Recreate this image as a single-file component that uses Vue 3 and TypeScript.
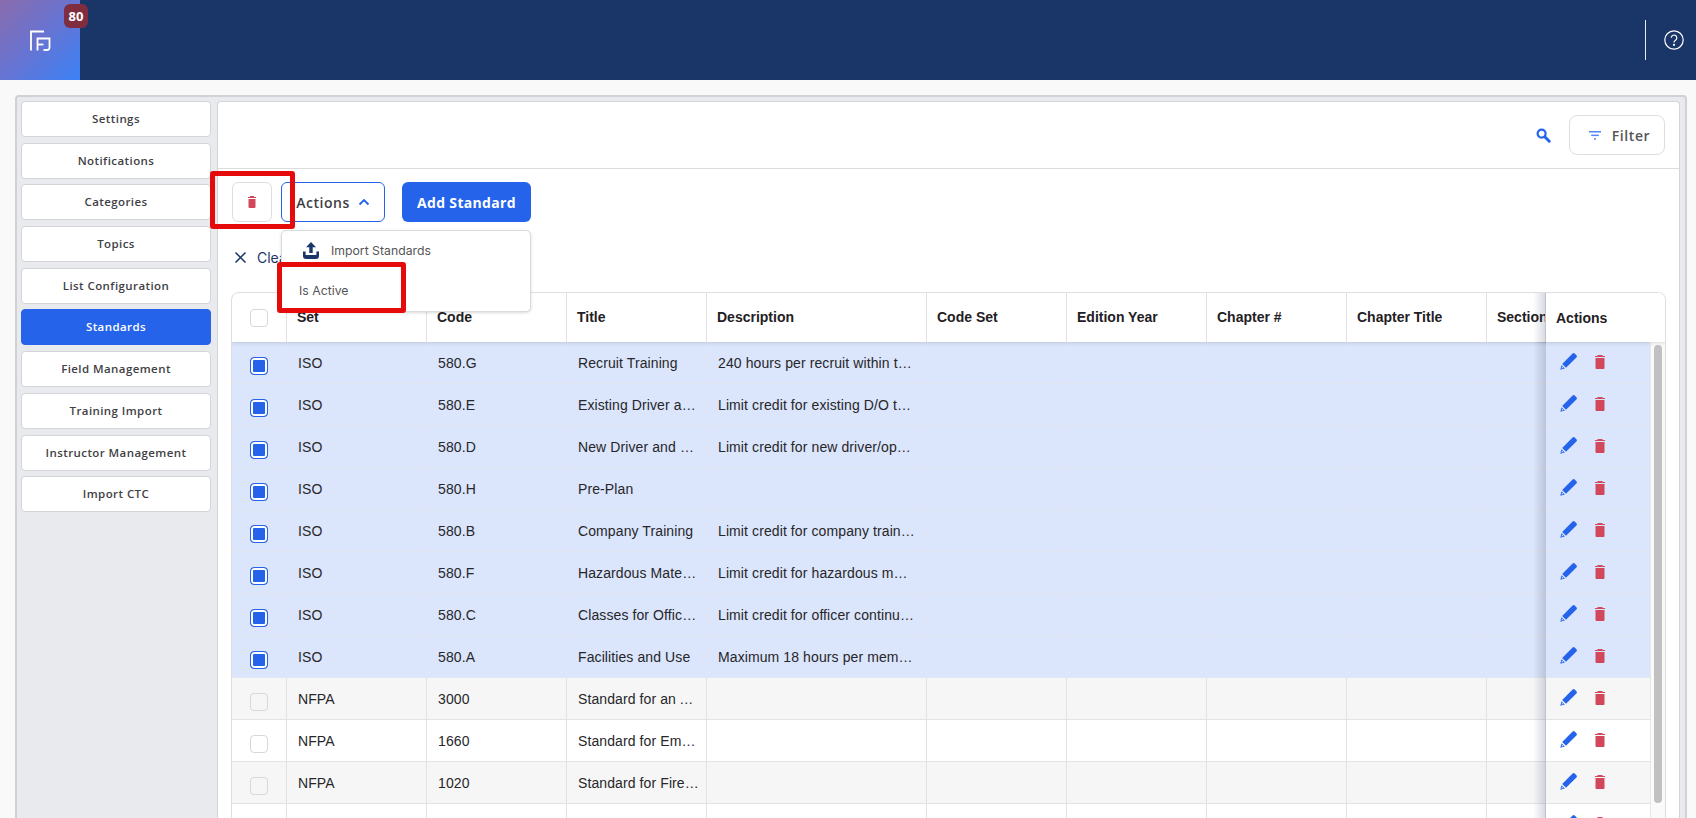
<template>
  <div class="page">
    <header class="topbar">
      <div class="logo">
        <svg width="22" height="22" viewBox="0 0 22 22" fill="none" stroke="#fff" stroke-width="1.8">
          <path d="M2 20.5V1.500H15" />
          <path d="M8.500 20.500V8.500H20.500V17.500Q20.500 20 18 20H14.500" />
          <path d="M8.500 14.500H14.500" />
        </svg>
        <span class="badge">80</span>
      </div>
      <div class="topbar-right">
        <span class="divider"></span>
        <svg class="help" width="20" height="20" viewBox="0 0 20 20" fill="none" stroke="#fff" stroke-width="1.2">
          <circle cx="10" cy="10" r="9.200" />
          <path d="M7.200 7.800a2.800 2.800 0 1 1 4.300 2.400c-1 .6-1.500 1.100-1.500 2.200" />
          <circle cx="10" cy="14.800" r=".5" fill="#fff" />
        </svg>
      </div>
    </header>

    <div class="shell">
      <nav class="side">
        <button v-for="item in navItems" :key="item" class="nav-btn" :class="{ active: item === 'Standards' }">
          {{ item }}
        </button>
      </nav>

      <main class="content">
        <div class="content-top">
          <svg class="search" width="15" height="15" viewBox="0 0 15 15">
            <circle cx="5.600" cy="5.600" r="4" fill="none" stroke="#2563eb" stroke-width="2.200" />
            <path d="M8.800 8.800L13.200 13.200" stroke="#2563eb" stroke-width="3" stroke-linecap="round" />
          </svg>
          <button class="filter-btn">
            <svg width="12" height="9" viewBox="0 0 12 9" fill="#4f86f7">
              <rect x="0" y="0" width="12" height="1.500" />
              <rect x="2.200" y="3.600" width="7.600" height="1.500" />
              <rect x="5" y="7.200" width="2" height="1.500" />
            </svg>
            <span>Filter</span>
          </button>
        </div>

        <div class="toolbar">
          <button class="icon-btn">
            <svg width="8" height="12" viewBox="0 0 8 12" fill="#d1485c">
              <path d="M0 1h8v1H0zM2 0h4v1H2zM.5 3h7v8a1 1 0 0 1-1 1h-5a1 1 0 0 1-1-1z" />
            </svg>
          </button>
          <button class="actions-btn">
            <span>Actions</span>
            <svg width="12" height="8" viewBox="0 0 12 8" fill="none" stroke="#2563eb" stroke-width="1.800">
              <path d="M1.500 6.500L6 2l4.500 4.500" />
            </svg>
          </button>
          <button class="add-btn">Add Standard</button>

          <div class="menu">
            <div class="menu-item">
              <svg width="18" height="17" viewBox="0 0 18 17" fill="#1a3668">
                <path d="M9 0l5 5.200h-3.300V11H7.300V5.200H4z" />
                <path d="M1 9.500h2.600V13h10.800V9.500H17V14a3 3 0 0 1-3 3H4a3 3 0 0 1-3-3z" />
              </svg>
              <span>Import Standards</span>
            </div>
            <div class="menu-item plain"><span>Is Active</span></div>
          </div>
          <span class="mark mark-trash"></span>
          <span class="mark mark-active"></span>
        </div>

        <div class="clear-row">
          <svg width="13" height="13" viewBox="0 0 13 13" fill="none" stroke="#1a3668" stroke-width="1.500">
            <path d="M1.500 1.500l10 10M11.500 1.500l-10 10" />
          </svg>
          <span>Clear</span>
        </div>

        <div class="table">
          <div class="row head">
            <div class="cell check-cell"><span class="box head-box"></span></div>
            <div v-for="col in columns" :key="col" class="cell">{{ col }}</div>
            <div class="cell actions-cell">Actions</div>
          </div>
          <div class="table-body">
            <div class="rows">
              <div
                v-for="row in rows"
                :key="row.code"
                class="row"
                :class="{ selected: row.selected }"
              >
                <div class="cell check-cell">
                  <span class="box" :class="{ checked: row.selected }"></span>
                </div>
                <div class="cell">{{ row.set }}</div>
                <div class="cell">{{ row.code }}</div>
                <div class="cell title-cell">{{ row.title }}</div>
                <div class="cell">{{ row.description }}</div>
                <div v-for="n in 5" :key="n" class="cell"></div>
                <div class="cell actions-cell">
                  <svg width="17" height="17" viewBox="0 0 17 17">
                    <path fill="#2563eb" d="M12.600.6a1.500 1.500 0 0 1 2.100 0l1.700 1.700a1.500 1.500 0 0 1 0 2.100L6 14.800 2.200 11z" />
                    <path fill="#2563eb" d="M1.500 12.200l3.300 3.300-4.500 1.200z" />
                    <path fill="#fff" d="M2.100 13.800l1.200 1.200-1.700.4z" />
                  </svg>
                  <svg width="10" height="14" viewBox="0 0 10 14" fill="#d1485c">
                    <path d="M0 1h10v1H0zM2.500 0h5v1h-5zM.5 3h9v10a1 1 0 0 1-1 1h-7a1 1 0 0 1-1-1z" />
                  </svg>
                </div>
              </div>
            </div>
            <div class="scroll-track"><span class="scroll-thumb"></span></div>
          </div>
        </div>
      </main>
    </div>
  </div>
</template>

<script setup lang="ts">
interface StandardRow {
  set: string;
  code: string;
  title: string;
  description: string;
  selected: boolean;
}

const navItems = [
  'Settings',
  'Notifications',
  'Categories',
  'Topics',
  'List Configuration',
  'Standards',
  'Field Management',
  'Training Import',
  'Instructor Management',
  'Import CTC',
];

const columns = [
  'Set',
  'Code',
  'Title',
  'Description',
  'Code Set',
  'Edition Year',
  'Chapter #',
  'Chapter Title',
  'Section',
];

const rows: StandardRow[] = [
  { set: 'ISO', code: '580.G', title: 'Recruit Training', description: '240 hours per recruit within the first year', selected: true },
  { set: 'ISO', code: '580.E', title: 'Existing Driver and Operator', description: 'Limit credit for existing D/O training', selected: true },
  { set: 'ISO', code: '580.D', title: 'New Driver and Operator', description: 'Limit credit for new driver/operator', selected: true },
  { set: 'ISO', code: '580.H', title: 'Pre-Plan', description: '', selected: true },
  { set: 'ISO', code: '580.B', title: 'Company Training', description: 'Limit credit for company training hours', selected: true },
  { set: 'ISO', code: '580.F', title: 'Hazardous Materials', description: 'Limit credit for hazardous materials', selected: true },
  { set: 'ISO', code: '580.C', title: 'Classes for Officers', description: 'Limit credit for officer continuing education', selected: true },
  { set: 'ISO', code: '580.A', title: 'Facilities and Use', description: 'Maximum 18 hours per member per year', selected: true },
  { set: 'NFPA', code: '3000', title: 'Standard for an Active Shooter', description: '', selected: false },
  { set: 'NFPA', code: '1660', title: 'Standard for Emergency', description: '', selected: false },
  { set: 'NFPA', code: '1020', title: 'Standard for Fire and', description: '', selected: false },
  { set: '', code: '', title: '', description: '', selected: false },
];
</script>

<style>
html,
body {
  margin: 0;
  height: 100%;
  overflow: hidden;
  background: #f9f9f9;
}
</style>

<style scoped>
.page {
  height: 818px;
  display: flex;
  flex-direction: column;
  overflow: hidden;
  font-family: Inter, sans-serif;
}

.topbar {
  flex: 0 0 80px;
  display: flex;
  justify-content: space-between;
  background: #1a3668;
}

.logo {
  position: relative;
  width: 80px;
  display: flex;
  align-items: center;
  justify-content: center;
  background: linear-gradient(135deg, #8a6cad 0%, #6a73cf 45%, #3b82f6 100%);
}

.logo svg {
  margin-top: 2px;
}

.badge {
  position: absolute;
  top: 4px;
  left: 64px;
  width: 24px;
  height: 24px;
  display: flex;
  align-items: center;
  justify-content: center;
  border-radius: 6px;
  background: #7f2d3f;
  color: #fff;
  font: 700 13px "Open Sans", sans-serif;
}

.topbar-right {
  display: flex;
  align-items: center;
  gap: 18px;
  padding-right: 12px;
}

.divider {
  width: 1px;
  height: 40px;
  background: #e6e9f0;
}

.shell {
  flex: 1;
  min-height: 0;
  margin: 15px 9px 0 15px;
  display: flex;
  gap: 6px;
  padding: 4px 5px 0 4px;
  background: #e9eaee;
  border: solid #d0d1d5;
  border-width: 2px 2px 0;
  border-radius: 4px 4px 0 0;
}

.side {
  flex: 0 0 190px;
  display: flex;
  flex-direction: column;
  gap: 5.700px;
}

.nav-btn {
  height: 36px;
  padding: 0 0 1px;
  background: #fff;
  border: 1px solid #d4d5d9;
  border-radius: 4px;
  color: #3f3f46;
  font: 600 11.500px "Open Sans", sans-serif;
  letter-spacing: 0.42px;
}

.nav-btn.active {
  background: #2563eb;
  border-color: #2563eb;
  color: #fff;
}

.content {
  flex: 1;
  min-width: 0;
  background: #fff;
  border: solid #d4d5d9;
  border-width: 1px 1px 0;
  border-radius: 4px 4px 0 0;
}

.content-top {
  height: 66px;
  display: flex;
  align-items: center;
  justify-content: flex-end;
  gap: 18px;
  padding-right: 14px;
  border-bottom: 1px solid #dcdcdc;
}

.filter-btn {
  width: 96px;
  height: 40px;
  padding: 0 0 0 5px;
  display: flex;
  align-items: center;
  justify-content: center;
  gap: 11px;
  background: #fff;
  border: 1px solid #dedede;
  border-radius: 8px;
  color: #555;
  font: 600 14px "Open Sans", sans-serif;
  letter-spacing: 0.6px;
}

.toolbar {
  position: relative;
  display: flex;
  align-items: center;
  gap: 9px;
  padding: 13px 0 0 14px;
}

.icon-btn {
  width: 40px;
  height: 40px;
  padding: 0;
  display: flex;
  align-items: center;
  justify-content: center;
  background: #fff;
  border: 1px solid #dedede;
  border-radius: 6px;
}

.actions-btn {
  width: 104px;
  height: 40px;
  display: flex;
  align-items: center;
  justify-content: center;
  gap: 8px;
  padding: 0;
  background: #fff;
  border: 1px solid #2563eb;
  border-radius: 6px;
  color: #3f3f46;
  font: 600 14px "Open Sans", sans-serif;
  letter-spacing: 0.5px;
}

.add-btn {
  width: 129px;
  height: 40px;
  margin-left: 8px;
  padding: 0;
  background: #2563eb;
  border: 0;
  border-radius: 6px;
  color: #fff;
  font: 700 14px "Open Sans", sans-serif;
  letter-spacing: 0.33px;
}

.menu {
  position: absolute;
  z-index: 5;
  top: 61px;
  left: 63px;
  width: 250px;
  height: 82px;
  box-sizing: border-box;
  background: #fff;
  border: 1px solid #d8dbe0;
  border-radius: 5px;
  box-shadow: 0 1px 3px rgba(0, 0, 0, 0.15);
  color: #555;
  font-size: 12.250px;
}

.menu-item {
  height: 38px;
  display: flex;
  align-items: center;
  gap: 11px;
  padding-left: 20px;
}

.menu-item.plain {
  height: 43px;
  padding-left: 17px;
}

.mark {
  position: absolute;
  z-index: 6;
  box-sizing: border-box;
  border: 5px solid #e60b0b;
  border-radius: 3px;
}

.mark-trash {
  top: 2px;
  left: -8px;
  width: 85px;
  height: 58px;
}

.mark-active {
  top: 93px;
  left: 59px;
  width: 129px;
  height: 51px;
}

.clear-row {
  height: 70px;
  box-sizing: border-box;
  display: flex;
  align-items: flex-start;
  gap: 10px;
  padding: 27px 0 0 16px;
  color: #1a3668;
  font-size: 14px;
}

.clear-row svg {
  margin-top: 2px;
}

.table {
  margin: 0 13px;
  border: solid #dedede;
  border-width: 1px 1px 0;
  border-radius: 8px 8px 0 0;
  overflow: hidden;
  color: #27272a;
  font: 14px "Liberation Sans", Arial, sans-serif;
}

.row {
  height: 42px;
  box-sizing: border-box;
  display: grid;
  grid-template-columns: 55px 140px 140px 140px 220px 140px 140px 140px 140px 1fr 104px;
  background: #fff;
  border-bottom: 1px solid #e2e2e8;
  letter-spacing: 0.1px;
}

.row:nth-child(odd) {
  background: #f6f6f6;
}

.row.selected {
  background: #dbe5fb;
  border-bottom-color: #e3e7f2;
}

.row.head {
  height: 49px;
  grid-template-columns: 55px 140px 140px 140px 220px 140px 140px 140px 140px 1fr 119px;
  background: #fff;
  border-bottom: 0;
  box-shadow: 0 1px 4px rgba(0, 0, 0, 0.14);
  position: relative;
  z-index: 2;
  font-weight: 700;
  color: #1f2024;
  letter-spacing: 0;
}

.cell {
  min-width: 0;
  display: flex;
  align-items: center;
  padding: 0 11px;
  overflow: hidden;
  border-right: 1px solid #e2e2e6;
}

.row.selected > .cell {
  border-right-color: #e3e7f2;
}

.row > .cell:not(.check-cell):not(.actions-cell) {
  display: block;
  line-height: 42px;
  white-space: nowrap;
  text-overflow: ellipsis;
}

.row > .cell.title-cell:not(.check-cell):not(.actions-cell) {
  padding-right: 7px;
}

.row.head > .cell:not(.check-cell):not(.actions-cell) {
  padding: 0 0 0 10px;
  line-height: 49px;
  text-overflow: clip;
}

.check-cell {
  justify-content: center;
  padding: 0;
}

.actions-cell {
  position: relative;
  z-index: 1;
  gap: 18px;
  padding: 0 0 2px 14px;
  border-right: 0;
  background: inherit;
  overflow: visible;
}

.row.head > .actions-cell {
  padding: 0 0 0 10px;
}

.actions-cell::before {
  content: "";
  position: absolute;
  top: 0;
  bottom: -1px;
  left: -13px;
  width: 13px;
  background: linear-gradient(to right, rgba(50, 60, 90, 0), rgba(50, 60, 90, 0.2));
}

.box {
  width: 16px;
  height: 16px;
  margin-top: 6px;
  background: #fff;
  border: 1px solid #d8d8d8;
  border-radius: 4px;
}

.row:nth-child(odd) .box {
  background: #f6f6f6;
}

.row .box.head-box {
  margin-top: 0;
  background: #fff;
}

.row .box.checked {
  background: #2563eb;
  border-color: #2563eb;
  box-shadow: inset 0 0 0 2px #fff;
}

.table-body {
  display: flex;
}

.rows {
  flex: 1;
  min-width: 0;
}

.scroll-track {
  flex: 0 0 15px;
  padding-top: 3px;
  background: #fafafa;
  border-left: 1px solid #e8e8e8;
  box-sizing: border-box;
}

.scroll-thumb {
  display: block;
  width: 8px;
  height: 458px;
  margin-left: 3px;
  border-radius: 4px;
  background: #c1c1c1;
}
</style>
